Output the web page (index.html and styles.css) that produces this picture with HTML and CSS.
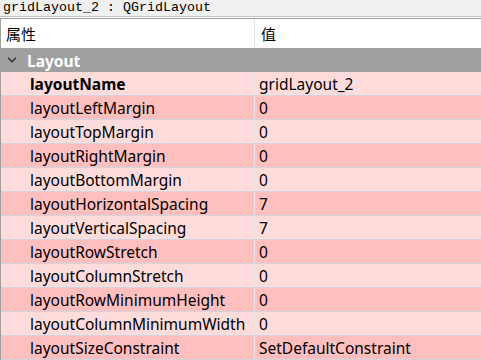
FILE: index.html
```html
<!DOCTYPE html>
<html lang="zh">
  <head>
    <meta charset="UTF-8" />
    <title>Property Editor</title>
    <link rel="stylesheet" href="styles.css">
  </head>
  <body>
    <div class="title-bar">gridLayout_2 : QGridLayout</div>
    <div class="tree">
      <div class="header">
        <div class="cell name">属性</div>
        <div class="cell value">值</div>
      </div>
      <div class="group">
        <svg class="chevron" width="10" height="6" viewBox="0 0 10 6">
          <path d="M1 0.8 L5 4.8 L9 0.8" fill="none" stroke="#2b2b2b" stroke-width="1.3" />
        </svg>
        <span>Layout</span>
      </div>
      <div class="row light">
        <div class="cell name bold">layoutName</div>
        <div class="cell value">gridLayout_2</div>
      </div>
      <div class="row dark">
        <div class="cell name">layoutLeftMargin</div>
        <div class="cell value">0</div>
      </div>
      <div class="row light">
        <div class="cell name">layoutTopMargin</div>
        <div class="cell value">0</div>
      </div>
      <div class="row dark">
        <div class="cell name">layoutRightMargin</div>
        <div class="cell value">0</div>
      </div>
      <div class="row light">
        <div class="cell name">layoutBottomMargin</div>
        <div class="cell value">0</div>
      </div>
      <div class="row dark">
        <div class="cell name">layoutHorizontalSpacing</div>
        <div class="cell value">7</div>
      </div>
      <div class="row light">
        <div class="cell name">layoutVerticalSpacing</div>
        <div class="cell value">7</div>
      </div>
      <div class="row dark">
        <div class="cell name">layoutRowStretch</div>
        <div class="cell value">0</div>
      </div>
      <div class="row light">
        <div class="cell name">layoutColumnStretch</div>
        <div class="cell value">0</div>
      </div>
      <div class="row dark">
        <div class="cell name">layoutRowMinimumHeight</div>
        <div class="cell value">0</div>
      </div>
      <div class="row light">
        <div class="cell name">layoutColumnMinimumWidth</div>
        <div class="cell value">0</div>
      </div>
      <div class="row dark">
        <div class="cell name">layoutSizeConstraint</div>
        <div class="cell value">SetDefaultConstraint</div>
      </div>
    </div>
  </body>
</html>
```

FILE: styles.css
```css
body,
html {
  margin: 0;
  padding: 0;
  height: 100%;
  overflow: hidden;
  background: #ffffff;
  font-family: "Noto Sans", "Noto Sans CJK SC", sans-serif;
  font-size: 15.5px;
  color: #000000;
}

.title-bar {
  height: 16px;
  line-height: 16px;
  padding-left: 3px;
  background: #f0f0f0;
  border-bottom: 1px solid #c4c4c4;
  font-family: "Liberation Mono", monospace;
  font-size: 13.33px;
  color: #000000;
  white-space: nowrap;
}

.tree {
  margin-top: 1px;
  border-top: 1px solid #a0a0a0;
  border-left: 1px solid #a0a0a0;
}

.header {
  display: flex;
  height: 29px;
  align-items: center;
  background: #ffffff;
  font-family: "Noto Sans CJK SC", sans-serif;
  font-size: 15px;
}

.header .name {
  padding-left: 5px;
  align-self: stretch;
  display: flex;
  align-items: center;
}

.header .value {
  padding-left: 6px;
}

.cell.name {
  width: 254px;
  box-sizing: border-box;
  border-right: 1px solid #e3e3e3;
  white-space: nowrap;
  overflow: hidden;
}

.group {
  display: flex;
  align-items: center;
  gap: 10px;
  height: 24px;
  padding-left: 6px;
  background: #a0a0a0;
  color: #ffffff;
  font-weight: 700;
}

.group span {
  padding-top: 1px;
}

.chevron {
  display: block;
}

.row {
  display: flex;
  height: 23px;
  border-bottom: 1px solid #d4d4dc;
}

.row .cell {
  padding-top: 1px;
  line-height: 22px;
}

.row .name {
  padding-left: 29px;
}

.row .value {
  padding-left: 4px;
}

.row.light {
  background: #ffdcdc;
}

.row.dark {
  background: #ffbfbf;
}

.bold {
  font-weight: 700;
}
```
